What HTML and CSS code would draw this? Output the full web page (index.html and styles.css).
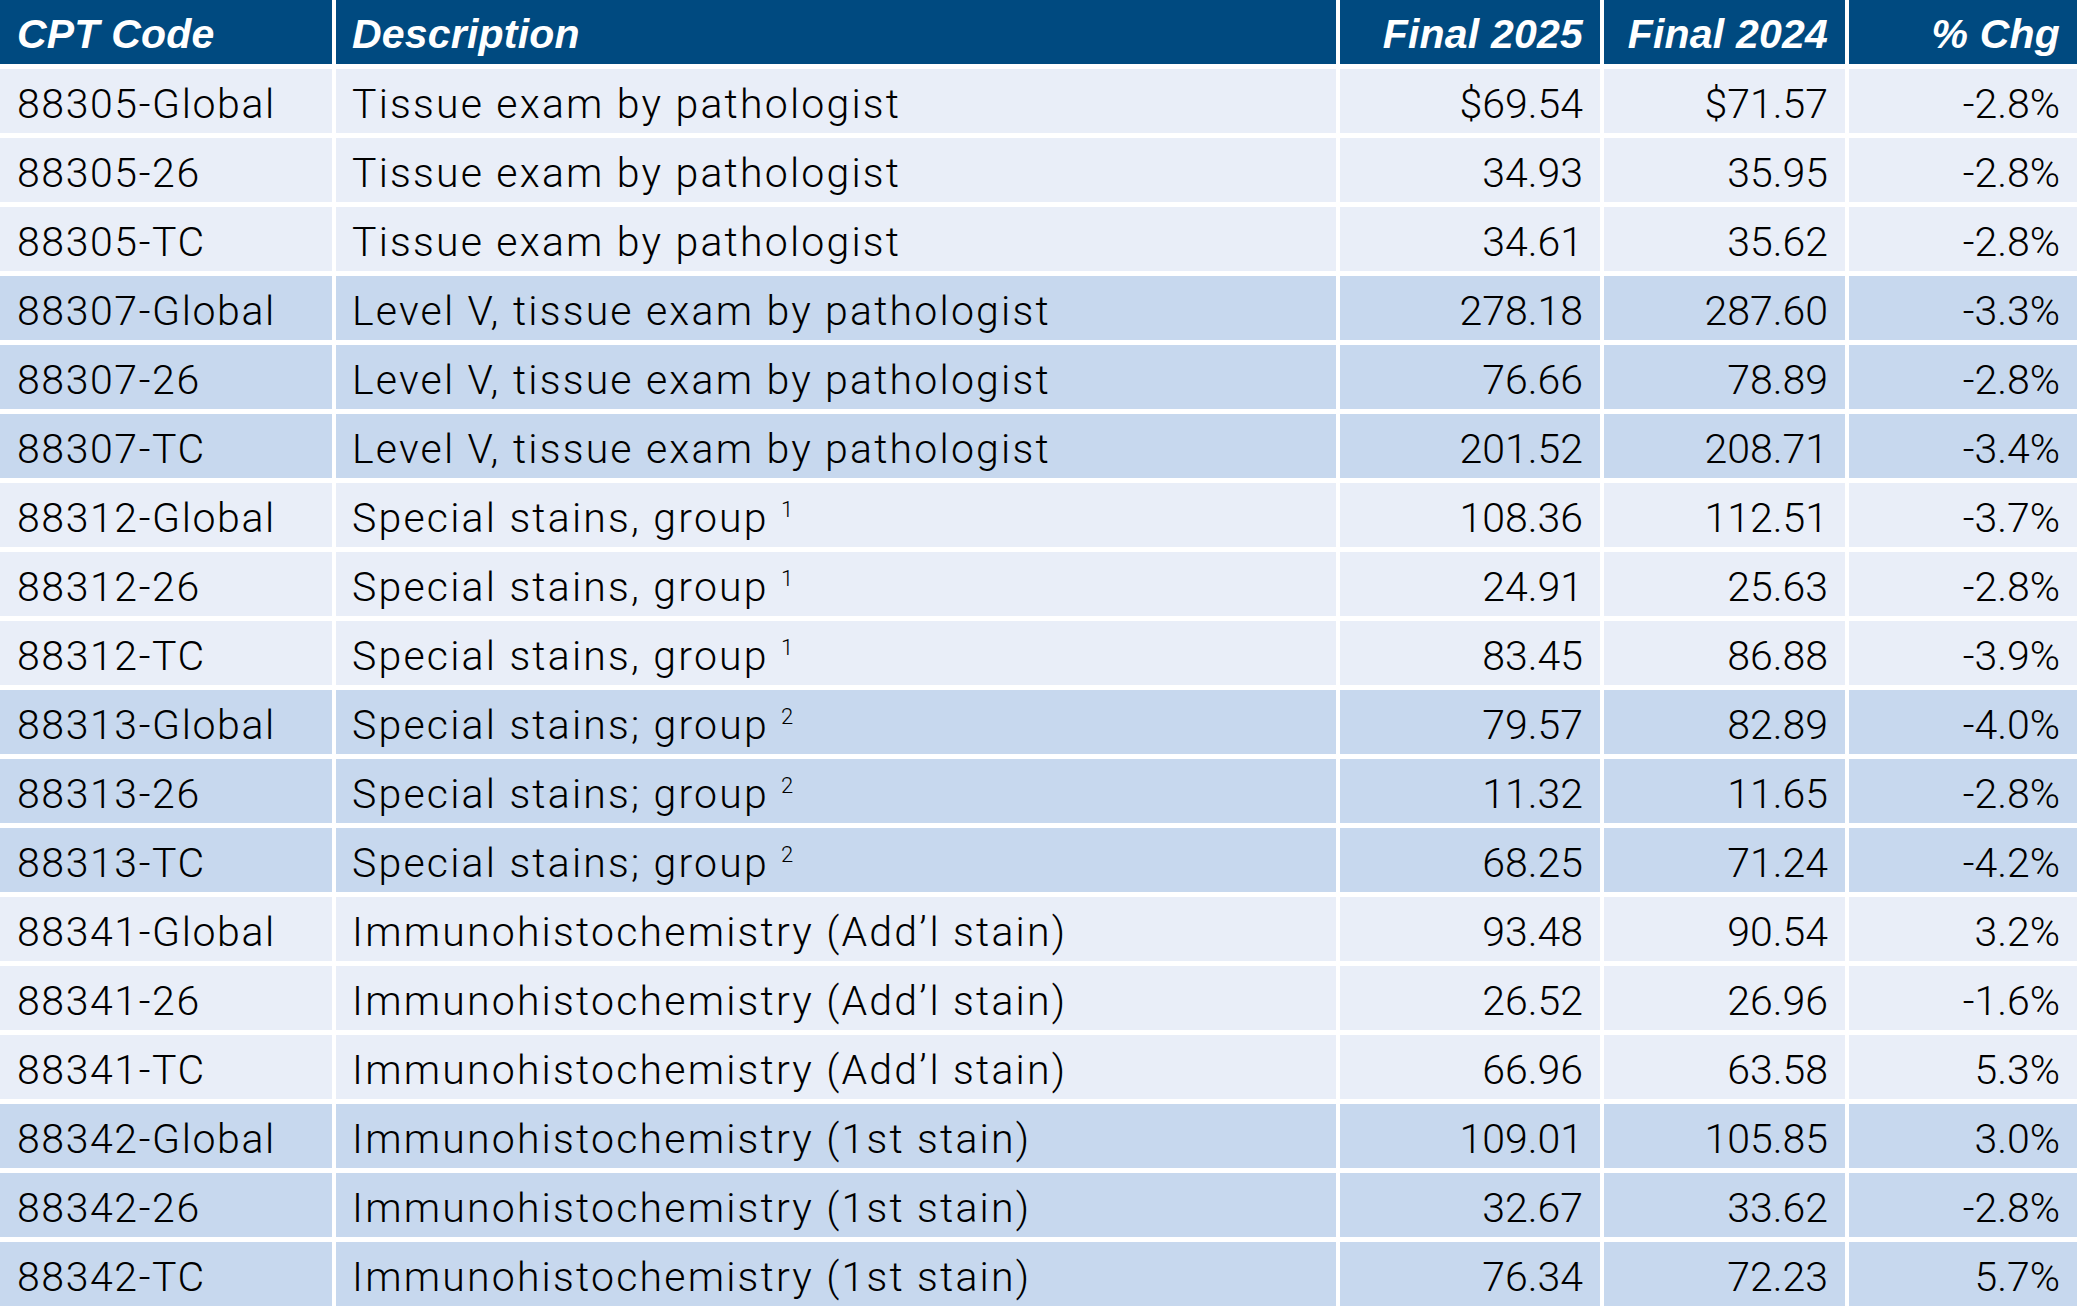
FILE: index.html
```html
<!DOCTYPE html>
<html>
<head>
<meta charset="utf-8">
<link rel="stylesheet" href="styles.css">
</head>
<body>
<div class="table">
  <div class="row head">
    <div class="c code">CPT Code</div><div class="c desc">Description</div><div class="c num">Final 2025</div><div class="c num">Final 2024</div><div class="c num">% Chg</div>
  </div>
  <div class="row light">
    <div class="c code">88305-Global</div><div class="c desc">Tissue exam by pathologist</div><div class="c num">$69.54</div><div class="c num">$71.57</div><div class="c num">-2.8%</div>
  </div>
  <div class="row light">
    <div class="c code">88305-26</div><div class="c desc">Tissue exam by pathologist</div><div class="c num">34.93</div><div class="c num">35.95</div><div class="c num">-2.8%</div>
  </div>
  <div class="row light">
    <div class="c code">88305-TC</div><div class="c desc">Tissue exam by pathologist</div><div class="c num">34.61</div><div class="c num">35.62</div><div class="c num">-2.8%</div>
  </div>
  <div class="row dark">
    <div class="c code">88307-Global</div><div class="c desc">Level V, tissue exam by pathologist</div><div class="c num">278.18</div><div class="c num">287.60</div><div class="c num">-3.3%</div>
  </div>
  <div class="row dark">
    <div class="c code">88307-26</div><div class="c desc">Level V, tissue exam by pathologist</div><div class="c num">76.66</div><div class="c num">78.89</div><div class="c num">-2.8%</div>
  </div>
  <div class="row dark">
    <div class="c code">88307-TC</div><div class="c desc">Level V, tissue exam by pathologist</div><div class="c num">201.52</div><div class="c num">208.71</div><div class="c num">-3.4%</div>
  </div>
  <div class="row light">
    <div class="c code">88312-Global</div><div class="c desc">Special stains, group <sup>1</sup></div><div class="c num">108.36</div><div class="c num">112.51</div><div class="c num">-3.7%</div>
  </div>
  <div class="row light">
    <div class="c code">88312-26</div><div class="c desc">Special stains, group <sup>1</sup></div><div class="c num">24.91</div><div class="c num">25.63</div><div class="c num">-2.8%</div>
  </div>
  <div class="row light">
    <div class="c code">88312-TC</div><div class="c desc">Special stains, group <sup>1</sup></div><div class="c num">83.45</div><div class="c num">86.88</div><div class="c num">-3.9%</div>
  </div>
  <div class="row dark">
    <div class="c code">88313-Global</div><div class="c desc">Special stains; group <sup>2</sup></div><div class="c num">79.57</div><div class="c num">82.89</div><div class="c num">-4.0%</div>
  </div>
  <div class="row dark">
    <div class="c code">88313-26</div><div class="c desc">Special stains; group <sup>2</sup></div><div class="c num">11.32</div><div class="c num">11.65</div><div class="c num">-2.8%</div>
  </div>
  <div class="row dark">
    <div class="c code">88313-TC</div><div class="c desc">Special stains; group <sup>2</sup></div><div class="c num">68.25</div><div class="c num">71.24</div><div class="c num">-4.2%</div>
  </div>
  <div class="row light">
    <div class="c code">88341-Global</div><div class="c desc">Immunohistochemistry (Add’l stain)</div><div class="c num">93.48</div><div class="c num">90.54</div><div class="c num">3.2%</div>
  </div>
  <div class="row light">
    <div class="c code">88341-26</div><div class="c desc">Immunohistochemistry (Add’l stain)</div><div class="c num">26.52</div><div class="c num">26.96</div><div class="c num">-1.6%</div>
  </div>
  <div class="row light">
    <div class="c code">88341-TC</div><div class="c desc">Immunohistochemistry (Add’l stain)</div><div class="c num">66.96</div><div class="c num">63.58</div><div class="c num">5.3%</div>
  </div>
  <div class="row dark">
    <div class="c code">88342-Global</div><div class="c desc">Immunohistochemistry (1st stain)</div><div class="c num">109.01</div><div class="c num">105.85</div><div class="c num">3.0%</div>
  </div>
  <div class="row dark">
    <div class="c code">88342-26</div><div class="c desc">Immunohistochemistry (1st stain)</div><div class="c num">32.67</div><div class="c num">33.62</div><div class="c num">-2.8%</div>
  </div>
  <div class="row dark">
    <div class="c code">88342-TC</div><div class="c desc">Immunohistochemistry (1st stain)</div><div class="c num">76.34</div><div class="c num">72.23</div><div class="c num">5.7%</div>
  </div>
</div>
</body>
</html>
```
FILE: styles.css
```css
html, body {
  margin: 0;
  padding: 0;
  background: #ffffff;
}
.table {
  display: grid;
  grid-template-columns: 332px 1000px 260px 241px 228px;
  column-gap: 4px;
  row-gap: 5px;
  font-family: Roboto, "Liberation Sans", Arial, sans-serif;
  font-weight: 300;
  color: #000000;
}
.row {
  display: contents;
}
.c {
  height: 64px;
  box-sizing: border-box;
  padding: 6px 16px 0 16px;
  line-height: 58px;
  font-size: 41px;
  white-space: nowrap;
  overflow: hidden;
}
.code {
  padding-left: 17px;
  letter-spacing: 1.6px;
}
.desc {
  letter-spacing: 2.2px;
}
.num {
  text-align: right;
  padding-right: 17px;
}
.head .c {
  background: #004a80;
  color: #ffffff;
  font-family: "Liberation Sans", Arial, sans-serif;
  font-weight: bold;
  font-style: italic;
  font-size: 41px;
  letter-spacing: 0.2px;
  padding-top: 5px;
}
.light .c {
  background: #e9eef8;
}
.dark .c {
  background: #c7d8ee;
}
sup {
  font-size: 22px;
  line-height: 0;
  vertical-align: 15px;
  letter-spacing: 0;
}
```
